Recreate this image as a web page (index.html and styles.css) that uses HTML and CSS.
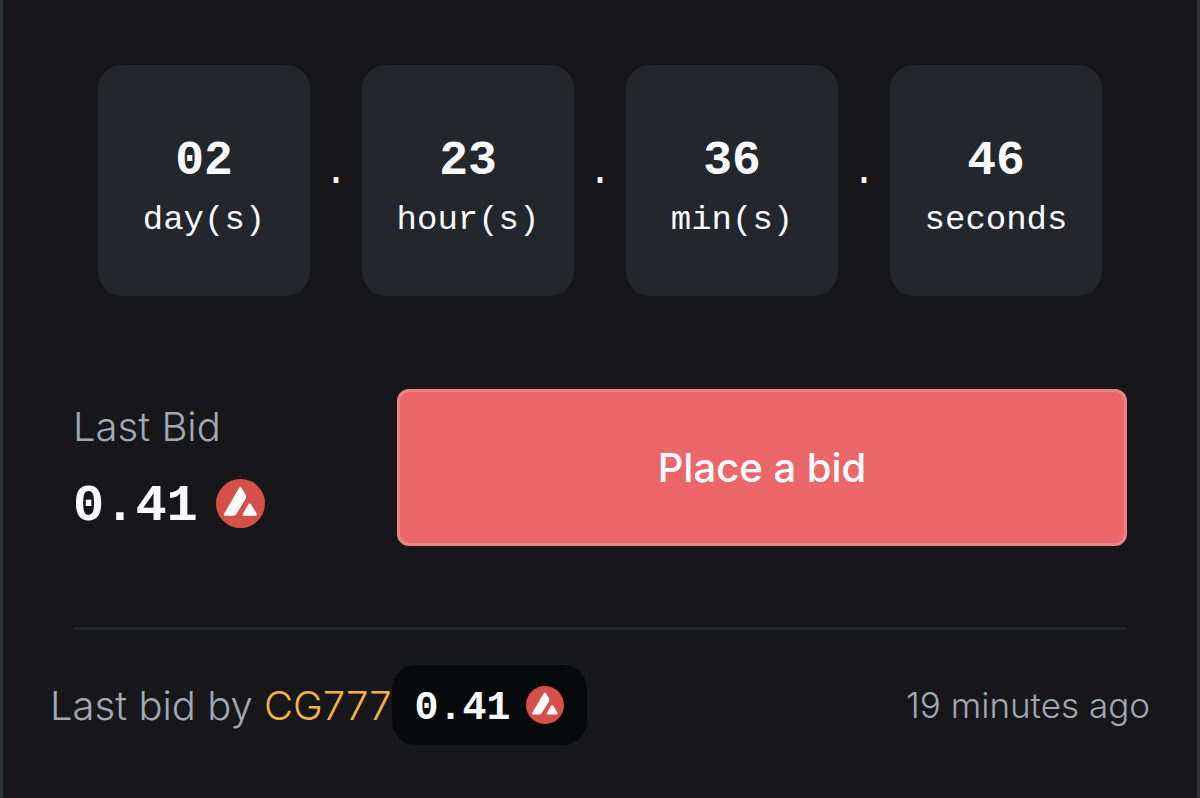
FILE: index.html
```
<!DOCTYPE html>
<html lang="en">

<head>
    <meta charset="UTF-8">
    <meta name="viewport" content="width=device-width, initial-scale=1.0">
    <title>Auction</title>
    <link rel="stylesheet" href="styles.css">
</head>

<body>
    <!-- AVAX coin, used twice -->
    <svg class="sprite" aria-hidden="true">
        <symbol id="avax" viewBox="0 0 48 48">
            <circle cx="24" cy="24" r="24" fill="#d6504b" />
            <path d="M22.2 9.4Q23.8 6.8 25.4 9.4L29 15.4Q30 17.4 29 19.4L20 34.2Q18.8 36 16.8 36H9.2Q7 36 8 34Z" fill="#fff" />
            <path d="M31.6 25Q33 22.8 34.4 25L39.9 34Q40.8 36 38.8 36H27.6Q25.4 36 26.4 34Z" fill="#fff" />
        </symbol>
    </svg>

    <main class="auction">
        <div class="countdown">
            <div class="timeBox"><strong>02</strong><span>day(s)</span></div>
            <span class="dot">.</span>
            <div class="timeBox"><strong>23</strong><span>hour(s)</span></div>
            <span class="dot">.</span>
            <div class="timeBox"><strong>36</strong><span>min(s)</span></div>
            <span class="dot">.</span>
            <div class="timeBox"><strong>46</strong><span>seconds</span></div>
        </div>

        <div class="bidRow">
            <div class="lastBid">
                <span class="label">Last Bid</span>
                <div class="price">
                    <span>0.41</span>
                    <svg class="coin"><use href="#avax" /></svg>
                </div>
            </div>
            <button type="button" class="bidBtn">Place a bid</button>
        </div>

        <div class="history">
            <p class="bidder">Last bid by <a href="#">CG777</a></p>
            <div class="pill">
                <span>0.41</span>
                <svg class="coin"><use href="#avax" /></svg>
            </div>
            <span class="time">19 minutes ago</span>
        </div>
    </main>
</body>

</html>
```

FILE: styles.css
```
* {
    box-sizing: border-box;
}

body {
    margin: 0;
    background: #171719;
    color: #fafaff;
    font-family: Inter, sans-serif;
    font-weight: 300;
}

.sprite {
    display: none;
}

.auction {
    min-height: 100vh;
    padding: 65px 47px 48px;
    border-left: 3px solid #2b3336;
    border-right: 3px solid #303134;
}

.countdown {
    display: flex;
    align-items: center;
    padding: 0 48px;
    font-family: "Liberation Mono", monospace;
}

.timeBox {
    flex: 1;
    display: flex;
    flex-direction: column;
    align-items: center;
    padding: 66px 0 46px;
    border-radius: 24px;
    background: #23262b;
}

.timeBox strong {
    font-size: 48px;
    font-weight: 700;
    line-height: 60px;
}

.timeBox span {
    font-size: 34px;
    line-height: 59px;
}

.dot {
    width: 52px;
    padding-bottom: 16px;
    font-size: 40px;
    line-height: 24px;
    text-align: center;
}

.bidRow {
    display: flex;
    margin: 93px 23px 0;
    padding-bottom: 81px;
    border-bottom: 3px solid #252628;
}

.lastBid {
    width: 324px;
    padding-top: 6px;
}

.label {
    display: block;
    font-size: 40px;
    line-height: 64px;
    color: #a1a7b3;
}

.price {
    display: flex;
    align-items: center;
    gap: 18px;
    margin-top: 4px;
    font: bold 52px/72px "Liberation Mono", monospace;
}

.price span {
    padding-top: 8px;
}

.price .coin {
    width: 49px;
    height: 49px;
}

.bidBtn {
    flex: 1;
    height: 157px;
    border: 3px solid #e98588;
    border-radius: 12px;
    background: #eb6769;
    color: #fff;
    font: 500 40px Inter, sans-serif;
    cursor: pointer;
}

.history {
    display: flex;
    align-items: center;
    margin-top: 35px;
}

.bidder {
    margin: 0;
    font-size: 40px;
    color: #a1a7b3;
}

.bidder a {
    color: #f6b04b;
    text-decoration: none;
}

.pill {
    display: flex;
    align-items: center;
    gap: 15px;
    padding: 0 23px;
    border-radius: 24px;
    background: #08090b;
    font: bold 40px/72px "Liberation Mono", monospace;
}

.pill span {
    padding-top: 8px;
}

.pill .coin {
    width: 38px;
    height: 38px;
}

.time {
    margin-left: auto;
    font-size: 35px;
    color: #a1a7b3;
}
```
